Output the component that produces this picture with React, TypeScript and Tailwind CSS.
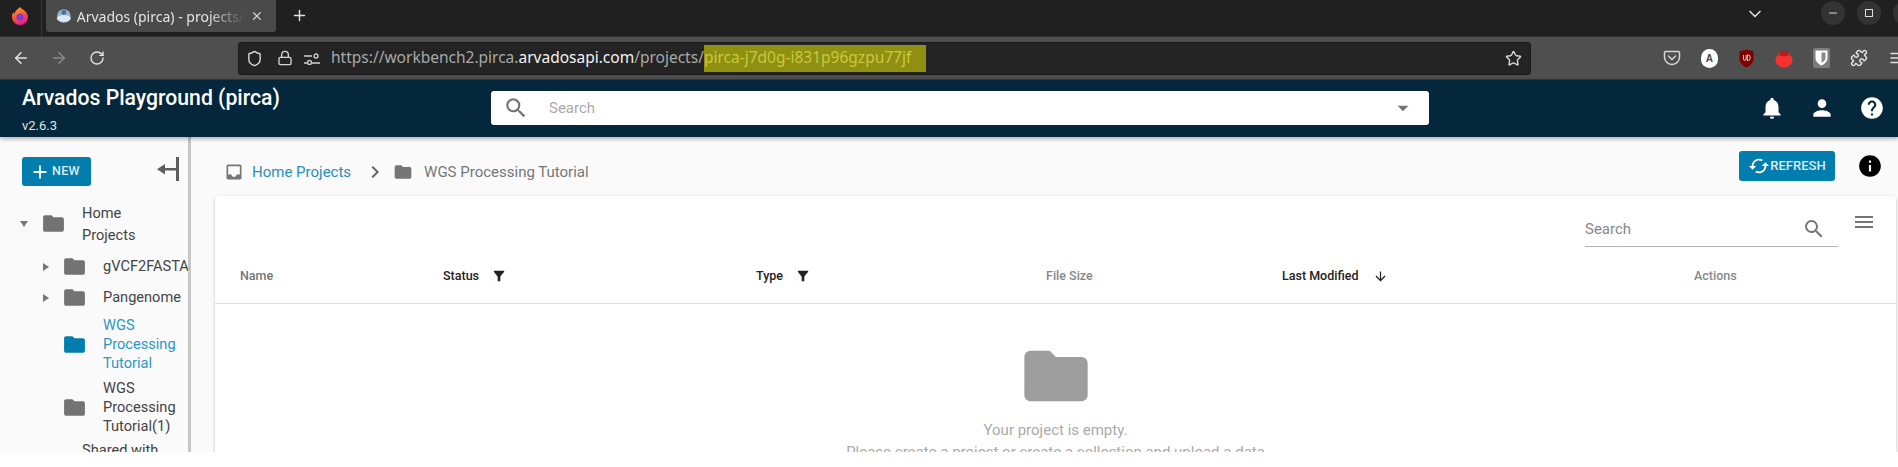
import React from "react";
import { MdNotifications, MdPerson, MdHelp, MdSearch, MdFolder, MdInbox, MdInfo, MdArrowDownward, MdMenu, MdAdd, MdChevronRight, MdArrowDropDown, MdFilterAlt, MdCached } from "react-icons/md";
import { LuArrowLeft, LuArrowRight, LuRotateCw, LuLock, LuShield, LuStar, LuPuzzle, LuChevronDown, LuX, LuPlus, LuMinus, LuMenu } from "react-icons/lu";

const Firefox = () => (
  <svg width="18" height="19" viewBox="0 0 18 19">
    <defs>
      <linearGradient id="ff" x1="0" y1="0" x2="0.4" y2="1">
        <stop offset="0" stopColor="#ffb01f" />
        <stop offset="0.55" stopColor="#ff5a2c" />
        <stop offset="1" stopColor="#e3208e" />
      </linearGradient>
    </defs>
    <path d="M9 1c1 2 3 2 5 4 2 2 3 4 3 6a8 8 0 0 1-16 0c0-2 .6-3.600 1.500-5 .2 1 .6 1.500 1.200 1.800C3.800 5 6.500 3.500 9 1z" fill="url(#ff)" />
    <circle cx="9" cy="11" r="3.600" fill="#7a3bd6" />
  </svg>
);

const Favicon = () => (
  <svg width="16" height="16" viewBox="0 0 16 16">
    <circle cx="8" cy="8" r="7" fill="#8fb6d6" />
    <ellipse cx="8" cy="10.500" rx="7" ry="3.500" fill="#dce9f2" />
    <circle cx="8" cy="4.500" r="2.500" fill="#55708a" />
  </svg>
);

const Pocket = () => (
  <svg width="18" height="18" viewBox="0 0 18 18" fill="none" stroke="#d6d6d6" strokeWidth="1.500">
    <path d="M2.500 2.500h13a1 1 0 0 1 1 1V8a7.500 7.500 0 0 1-15 0V3.500a1 1 0 0 1 1-1z" />
    <path d="M5.500 7 9 10.500 12.500 7" strokeLinecap="round" />
  </svg>
);

const AvatarA = () => (
  <div className="flex h-[19px] w-[17px] items-center justify-center rounded-full bg-white font-['Liberation_Sans',sans-serif] text-[10px] font-bold text-[#444]">A</div>
);

const UBlock = () => (
  <svg width="15" height="19" viewBox="0 0 15 19">
    <path d="M7.500 0.500 14.500 2.500V10c0 4-3.500 7-7 8.500C4 17 .5 14 .5 10V2.500z" fill="#800000" />
    <path d="M4.500 6v4a1.300 1.300 0 0 0 2.600 0V6M8.300 6h1.300a2 2 0 0 1 1.500 2v1.500a2 2 0 0 1-1.500 2H8.300z" fill="none" stroke="#e8e8e8" strokeWidth="0.900" />
  </svg>
);

const Tomato = () => (
  <svg width="18" height="20" viewBox="0 0 18 20">
    <ellipse cx="9" cy="12" rx="8.500" ry="7.500" fill="#f5322f" />
    <path d="M9 1 10 4l4-1-2 3 3 1-6 1.500L3 7l3-1-2-3 4 1z" fill="#b81d1d" />
  </svg>
);

const Bitwarden = () => (
  <div className="flex h-[20px] w-[17px] items-center justify-center rounded-[2px] bg-[#7d7d7d]">
    <svg width="13" height="16" viewBox="0 0 13 16">
      <path d="M.5 .5h12v7.500c0 3.500-3 6-6 7.500-3-1.500-6-4-6-7.500z" fill="#fff" />
      <path d="M6.500 2.500h4v5.500c0 2-2 3.600-4 4.800z" fill="#8a8a8a" />
    </svg>
  </div>
);

const Tune = () => (
  <svg width="16" height="13" viewBox="0 0 16 13" fill="none" stroke="#cfcfcf" strokeWidth="1.300">
    <path d="M0 4h8M0 11h3M8 11h8" />
    <circle cx="12" cy="4" r="2" />
    <circle cx="5.500" cy="10.500" r="2" />
  </svg>
);

const Collapse = () => (
  <svg width="22" height="24" viewBox="0 0 22 24" fill="#5e5e5e">
    <rect x="19" y="0" width="3" height="24" />
    <rect x="4" y="11" width="15" height="2.500" />
    <path d="M0 12.200 8 7v10.500z" />
  </svg>
);

function TreeRow({ level, arrow, label, active, h }: { level: 0 | 1; arrow?: "down" | "right"; label: string[]; active?: boolean; h: string }) {
  return (
    <div className={`flex items-center ${h} ${level === 0 ? "pl-[18px]" : "pl-[39px]"}`}>
      <div className="flex w-[25px] shrink-0 items-center justify-start">
        {arrow === "down" && <div className="ml-[2px] h-0 w-0 border-x-[4px] border-t-[6px] border-x-transparent border-t-[#777]" />}
        {arrow === "right" && <div className="ml-[4px] h-0 w-0 border-y-[4px] border-l-[6px] border-y-transparent border-l-[#777]" />}
      </div>
      <MdFolder className={`-mx-[2px] shrink-0 text-[25px] ${active ? "text-[#017ead]" : "text-[#737373]"}`} />
      <div className={`ml-[18px] whitespace-nowrap text-[14.6px] leading-[19px] ${active ? "text-[#2b97c3]" : "text-[#444]"}`}>
        {label.map((l) => <div key={l}>{l}</div>)}
      </div>
    </div>
  );
}

export default function App() {
  return (
    <div className="h-[467px] w-[1898px] overflow-hidden bg-white font-['Roboto',sans-serif]">
      <div className="h-[452px] overflow-hidden">
        {/* tab strip */}
        <div className="flex h-[36px] items-start bg-[#202020]">
          <div className="flex h-[36px] w-[42px] items-center justify-center border-r border-[#3a3a3a] pb-[6px] pr-[2px]"><Firefox /></div>
          <div className="ml-[4px] flex h-[32px] w-[230px] items-center rounded-b-[3px] bg-[#4a4a4a] pl-[10px] pr-[12px] font-['Noto_Sans',sans-serif] text-[#e4e4e4]">
            <Favicon />
            <span className="ml-[5px] w-[172px] overflow-hidden whitespace-nowrap text-[14px] [mask-image:linear-gradient(to_right,black_78%,transparent)]">Arvados (pirca) - projects/</span>
            <LuX className="ml-[5px] text-[14px] text-[#ddd]" />
          </div>
          <LuPlus className="ml-[15px] mt-[7px] text-[17px] text-[#e4e4e4]" />
          <div className="ml-auto flex items-center">
            <LuChevronDown className="mr-[56px] mt-[4px] text-[20px] text-[#ddd]" />
            <div className="flex h-[24px] w-[24px] translate-y-[1px] items-center justify-center rounded-full bg-[#333]"><LuMinus className="text-[12px] text-[#ddd]" /></div>
            <div className="ml-[12px] flex h-[24px] w-[24px] translate-y-[1px] items-center justify-center rounded-full bg-[#333]">
              <div className="h-[8px] w-[8px] border border-[#ddd]" />
            </div>
            <div className="ml-[12px] -mr-[19px] h-[24px] w-[24px] translate-y-[1px] rounded-full bg-[#333]" />
          </div>
        </div>
        {/* toolbar */}
        <div className="flex h-[43px] items-center border-t border-[#333] bg-[#4f4f4f] pl-[2px]">
          <div className="flex w-[38px] shrink-0 justify-center"><LuArrowLeft className="text-[18px] text-[#e6e6e6]" /></div>
          <div className="flex w-[38px] shrink-0 justify-center"><LuArrowRight className="text-[18px] text-[#8a8a8a]" /></div>
          <div className="flex w-[38px] shrink-0 justify-center"><LuRotateCw className="text-[16px] text-[#e6e6e6]" /></div>
          <div className="ml-[122px] flex h-[33px] w-[1293px] shrink-0 items-center rounded-[3px] border border-[#1a1a1a] bg-[#242424] pl-[7px] pr-[8px] font-['Noto_Sans',sans-serif] text-[15.5px] text-[#a8a8a8]">
            <LuShield className="text-[17px] text-[#d6d6d6]" />
            <LuLock className="ml-[14px] text-[16px] text-[#d6d6d6]" />
            <span className="ml-[11px]"><Tune /></span>
            <span className="ml-[11px] whitespace-nowrap">https://workbench2.pirca.<span className="text-[#f2f2f2]">arvadosapi.com</span>/projects/</span>
            <span className="flex h-[27px] w-[222px] items-center bg-[#8f8f12] text-[#c9c93c]">pirca-j7d0g-i831p96gzpu77jf</span>
            <LuStar className="ml-auto text-[17px] text-[#d6d6d6]" />
          </div>
          <div className="ml-[122px] flex shrink-0 items-center">
            <div className="flex w-[37.500px] shrink-0 justify-center"><Pocket /></div>
            <div className="flex w-[37.500px] shrink-0 justify-center"><AvatarA /></div>
            <div className="flex w-[37.500px] shrink-0 justify-center"><UBlock /></div>
            <div className="flex w-[37.500px] shrink-0 justify-center"><Tomato /></div>
            <div className="flex w-[37.500px] shrink-0 justify-center"><Bitwarden /></div>
            <div className="flex w-[37.500px] shrink-0 justify-center"><LuPuzzle className="text-[18px] text-[#e0e0e0]" /></div>
            <div className="flex w-[37.500px] shrink-0 justify-center"><LuMenu className="text-[18px] text-[#e0e0e0]" /></div>
          </div>
        </div>
        {/* app header */}
        <header className="relative z-10 flex h-[58px] items-start border-t border-[#333] bg-[#04273b] shadow-[0_2px_4px_rgba(0,0,0,0.3)]">
          <div className="w-[491px] pl-[22px] pt-[4px] text-white">
            <div className="text-[21.2px] font-medium leading-[28px]">Arvados Playground (pirca)</div>
            <div className="mt-[7px] text-[13px] leading-[14px] text-[#dfe5e8]">v2.6.3</div>
          </div>
          <div className="mt-[11px] flex h-[34px] w-[938px] items-center rounded-[3px] bg-white pl-[12px] pr-[13px]">
            <MdSearch className="text-[26px] text-[#757575]" />
            <span className="ml-[20px] text-[15px] text-[#aaa]">Search</span>
            <MdArrowDropDown className="ml-auto text-[26px] text-[#757575]" />
          </div>
          <div className="ml-auto mr-[13px] mt-[15px] flex items-center gap-[24px] text-white">
            <MdNotifications className="text-[26px]" />
            <MdPerson className="text-[26px]" />
            <MdHelp className="text-[26px]" />
          </div>
        </header>
        {/* body */}
        <div className="flex h-[316px]">
          <aside className="h-full w-[191px] shrink-0 overflow-hidden border-r-[3px] border-[#c6c6c6] bg-[#fafafa]">
            <div className="flex h-[59px] items-start pl-[22px] pt-[20px]">
              <div className="flex h-[29px] w-[69px] shrink-0 items-center rounded-[3px] bg-[#017ead] pl-[7px] text-[12.5px] font-medium tracking-[0.3px] text-[#dcecf3]">
                <MdAdd className="mr-[1px] text-[22px] text-white" />NEW
              </div>
              <span className="ml-[66px]"><Collapse /></span>
            </div>
            <TreeRow level={0} arrow="down" label={["Home", "Projects"]} h="h-[55px] [&>div:last-child]:leading-[22px]" />
            <TreeRow level={1} arrow="right" label={["gVCF2FASTA"]} h="h-[31px]" />
            <TreeRow level={1} arrow="right" label={["Pangenome"]} h="h-[31px]" />
            <TreeRow level={1} active label={["WGS", "Processing", "Tutorial"]} h="h-[63px]" />
            <TreeRow level={1} label={["WGS", "Processing", "Tutorial(1)"]} h="h-[63px]" />
            <div className="pl-[82px] pt-[2px] text-[14.6px] leading-[19px] text-[#444]">Shared with</div>
          </aside>
          <main className="min-w-0 flex-1 bg-[#fafafa] pl-[24px] pr-[2px]">
            <div className="flex h-[59px] items-start">
              <div className="ml-[9px] flex h-[44px] items-center pt-[26px]">
                <MdInbox className="text-[20px] text-[#757575]" />
                <span className="ml-[8px] text-[15px] text-[#2b8fb8]">Home Projects</span>
                <MdChevronRight className="ml-[12px] text-[24px] text-[#666]" />
                <MdFolder className="ml-[6px] text-[20px] text-[#757575]" />
                <span className="ml-[11px] text-[15px] text-[#777]">WGS Processing Tutorial</span>
              </div>
              <div className="ml-auto mr-[13px] mt-[14px] flex items-center">
                <div className="flex h-[30px] w-[96px] items-center justify-center rounded-[3px] bg-[#017ead] text-[13px] font-medium text-[#dcecf3]">
                  <MdCached className="text-[22px] text-white" />REFRESH
                </div>
                <MdInfo className="ml-[22px] text-[26px] text-black" />
              </div>
            </div>
            <section className="h-[257px] overflow-hidden rounded-t-[4px] bg-white shadow-[0_1px_3px_rgba(0,0,0,0.25)]">
              <div className="flex h-[55px] items-start">
                <div className="ml-auto mt-[16px] flex h-[35px] w-[253px] items-center justify-between border-b border-[#b5b5b5] pr-[12px]">
                  <span className="text-[15px] text-[#888]">Search</span>
                  <MdSearch className="text-[24px] text-[#757575]" />
                </div>
                <MdMenu className="ml-[14px] mr-[20px] mt-[14px] text-[24px] text-[#757575]" />
              </div>
              <div className="flex h-[53px] items-center border-b border-[#e2e2e2] pb-[2px] text-[12.5px] font-medium">
                <span className="w-[228px] pl-[25px] text-[#757575]">Name</span>
                <span className="flex w-[313px] items-center text-[#222]">Status<MdFilterAlt className="ml-[12px] text-[16px] text-[#222]" /></span>
                <span className="flex w-[290px] items-center text-[#222]">Type<MdFilterAlt className="ml-[12px] text-[16px] text-[#222]" /></span>
                <span className="w-[236px] text-[#888]">File Size</span>
                <span className="flex w-[412px] items-center text-[#222]">Last Modified<MdArrowDownward className="ml-[14px] text-[15px] text-[#222]" /></span>
                <span className="text-[#888]">Actions</span>
              </div>
              <div className="flex flex-col items-center pt-[46px] text-[15px] leading-[18px] text-[#aaa]">
                <MdFolder className="-my-[12px] text-[76px] leading-none text-[#9e9e9e]" />
                <div className="mt-[19px] whitespace-nowrap">Your project is empty.</div>
                <div className="mt-[4px] whitespace-nowrap">Please create a project or create a collection and upload a data</div>
              </div>
            </section>
          </main>
        </div>
      </div>
    </div>
  );
}
